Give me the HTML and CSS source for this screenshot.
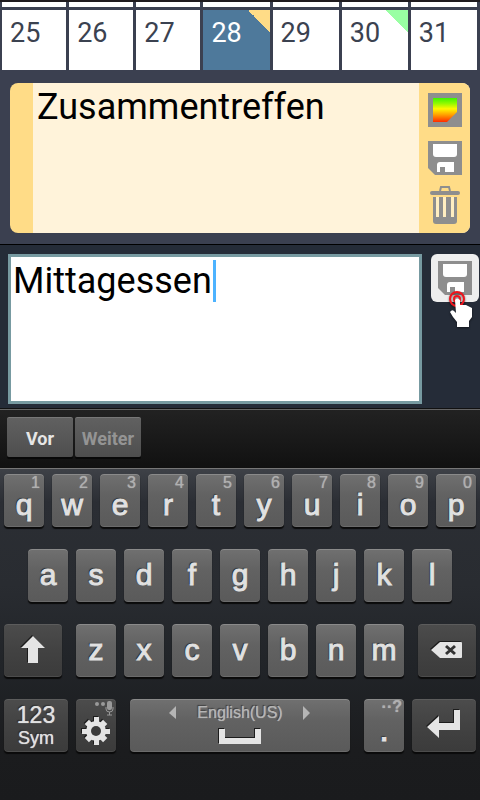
FILE: index.html
```html
<!DOCTYPE html>
<html lang="de">
  <head>
    <meta charset="UTF-8" />
    <meta name="viewport" content="width=device-width, initial-scale=1.0" />
    <title>Kalender</title>
    <link rel="stylesheet" href="styles.css">
  </head>
  <body>
    <!-- Calendar -->
    <section class="calendar">
      <div class="week previous">
        <span></span><span></span><span></span><span></span><span></span><span></span><span></span>
      </div>
      <div class="week">
        <button class="day">25</button>
        <button class="day">26</button>
        <button class="day">27</button>
        <button class="day selected marked-yellow">28</button>
        <button class="day">29</button>
        <button class="day marked-green">30</button>
        <button class="day">31</button>
      </div>
    </section>

    <!-- Saved note -->
    <section class="notes">
      <article class="note">
        <p class="note-text">Zusammentreffen</p>
        <div class="note-actions">
          <button class="icon-button" aria-label="Farbe">
            <svg width="34" height="34" viewBox="0 0 34 34">
              <defs>
                <linearGradient id="rainbow" x1="0" y1="0" x2="0" y2="1">
                  <stop offset="0" stop-color="#3df500" />
                  <stop offset="0.22" stop-color="#8dfa00" />
                  <stop offset="0.45" stop-color="#fff800" />
                  <stop offset="0.7" stop-color="#ffa000" />
                  <stop offset="1" stop-color="#ff2a00" />
                </linearGradient>
              </defs>
              <rect width="34" height="34" fill="#8e8e8e" />
              <path d="M5 5H29V19L19 29H5Z" fill="url(#rainbow)" />
            </svg>
          </button>
          <button class="icon-button" aria-label="Speichern">
            <svg width="34" height="34" viewBox="0 0 34 34">
              <path d="M0 0H34V34H7L0 27Z" fill="#8e8e8e" />
              <path d="M5 3H29V13Q29 16 26 16H8Q5 16 5 13Z" fill="#fff" />
              <path d="M9 31V24Q9 21 12 21H26V31H17V26H12V31Z" fill="#fff" />
            </svg>
          </button>
          <button class="icon-button" aria-label="Löschen">
            <svg width="34" height="38" viewBox="0 0 34 38">
              <path d="M12 5L13 1H21L22 5" fill="none" stroke="#8e8e8e" stroke-width="2" />
              <rect x="2" y="5" width="30" height="4" rx="2" fill="#8e8e8e" />
              <path d="M5 11H29V35Q29 38 26 38H8Q5 38 5 35Z" fill="#8e8e8e" />
              <path d="M8 11H11V31H8ZM15 11H18V31H15ZM23 11H26V31H23Z" fill="#ffeec1" />
            </svg>
          </button>
        </div>
      </article>
    </section>

    <!-- New note -->
    <section class="editor">
      <div class="field">
        <textarea class="field-input" aria-label="Neue Notiz" spellcheck="false">Mittagessen</textarea>
        <span class="caret"></span>
      </div>
      <button class="save-button" aria-label="Notiz speichern">
        <svg width="34" height="34" viewBox="0 0 34 34">
          <path d="M0 0H34V34H7L0 27Z" fill="#8e8e8e" />
          <path d="M5 3H29V13Q29 16 26 16H8Q5 16 5 13Z" fill="#fff" />
          <path d="M9 31V24Q9 21 12 21H26V31H17V26H12V31Z" fill="#fff" />
        </svg>
        <svg class="pointer" width="28" height="42" viewBox="0 0 28 42">
          <circle cx="9" cy="9" r="7" fill="none" stroke="#f0141c" stroke-width="2" />
          <circle cx="9" cy="9" r="3" fill="none" stroke="#f0141c" stroke-width="2" />
          <path d="M7 10Q9 7 12 10V15L18 15L24 18V27L21 31V37H9V32L5 27L2 22Q4 19 6 21L8 23Z" fill="#fff" />
        </svg>
      </button>
    </section>

    <!-- Suggestion bar -->
    <nav class="toolbar">
      <button class="tool">Vor</button>
      <button class="tool" disabled>Weiter</button>
    </nav>

    <!-- Keyboard -->
    <section class="keyboard">
      <div class="row numbered">
        <button class="key"><small>1</small>q</button>
        <button class="key"><small>2</small>w</button>
        <button class="key"><small>3</small>e</button>
        <button class="key"><small>4</small>r</button>
        <button class="key"><small>5</small>t</button>
        <button class="key"><small>6</small>y</button>
        <button class="key"><small>7</small>u</button>
        <button class="key"><small>8</small>i</button>
        <button class="key"><small>9</small>o</button>
        <button class="key"><small>0</small>p</button>
      </div>
      <div class="row indented">
        <button class="key">a</button>
        <button class="key">s</button>
        <button class="key">d</button>
        <button class="key">f</button>
        <button class="key">g</button>
        <button class="key">h</button>
        <button class="key">j</button>
        <button class="key">k</button>
        <button class="key">l</button>
      </div>
      <div class="row">
        <button class="key dark shift" aria-label="Shift">
          <svg width="26" height="28" viewBox="0 0 26 28">
            <path d="M13 0L25 12H18V27H8V12H1Z" />
          </svg>
        </button>
        <button class="key">z</button>
        <button class="key">x</button>
        <button class="key">c</button>
        <button class="key">v</button>
        <button class="key">b</button>
        <button class="key">n</button>
        <button class="key">m</button>
        <button class="key dark backspace" aria-label="Backspace">
          <svg width="32" height="18" viewBox="0 0 32 18">
            <path d="M0 9L9 1H30Q31 1 31 2V16Q31 17 30 17H9Z" />
            <path class="cross" d="M15 5L24 13M24 5L15 13" />
          </svg>
        </button>
      </div>
      <div class="row">
        <button class="key dark symbols"><span>123</span><span class="sym">Sym</span></button>
        <button class="key dark settings" aria-label="Settings">
          <svg class="hint" width="20" height="15" viewBox="0 0 20 15">
            <circle cx="3" cy="3" r="2" />
            <circle cx="9" cy="3" r="2" />
            <rect x="13" y="0" width="5" height="9" rx="2" />
            <path class="stand" d="M12 6V8Q12 11 15.500 11T19 8V6M15.500 11V14M13 14H18" />
          </svg>
          <svg width="28" height="28" viewBox="-14 -14 28 28">
            <rect x="-2" y="-14" width="5" height="28" />
            <rect x="-14" y="-2" width="28" height="5" />
            <rect x="-3" y="-13" width="6" height="26" transform="rotate(45)" />
            <rect x="-3" y="-13" width="6" height="26" transform="rotate(-45)" />
            <circle r="10" />
            <circle class="hole" r="5" />
          </svg>
        </button>
        <button class="key space">
          <span class="language">
            <svg width="8" height="14" viewBox="0 0 8 14"><path d="M0 7L7 0V13Z" /></svg>
            English(US)
            <svg width="8" height="14" viewBox="0 0 8 14"><path d="M0 0L7 7L0 14Z" /></svg>
          </span>
          <svg width="44" height="16" viewBox="0 0 44 16">
            <path d="M1 0H7V9H37V0H43V15H1Z" />
          </svg>
        </button>
        <button class="key period"><small>··?</small>.</button>
        <button class="key dark enter" aria-label="Enter">
          <svg width="34" height="32" viewBox="0 0 34 32">
            <path d="M0 18L12 7V14H27V1H33V21H12V29Z" />
          </svg>
        </button>
      </div>
    </section>
  </body>
</html>
```
FILE: styles.css
```css
* {
  box-sizing: border-box;
}

body {
  margin: 0;
  min-height: 100vh;
  display: flex;
  flex-direction: column;
  background-color: #3b4050;
  font-family: Roboto, sans-serif;
}

button {
  margin: 0;
  padding: 0;
  border: none;
  font-family: inherit;
  cursor: pointer;
}

svg {
  display: block;
}

/* Calendar */
.calendar {
  border-top: 2px solid #1f1b1e;
}

.week {
  display: grid;
  grid-template-columns: repeat(3, 64fr) repeat(4, 66fr);
  gap: 3px;
  padding: 0 3px 0 2px;
}

.previous {
  height: 5px;
  margin-bottom: 3px;
}

.previous span {
  background-color: #fff;
}

.day {
  height: 60px;
  padding: 7px 8px;
  display: flex;
  background-color: #fff;
  color: #3b4250;
  font-size: 27px;
  line-height: 32px;
}

.selected {
  background-color: #4e799b;
  color: #fff;
}

.marked-yellow {
  background-image: linear-gradient(45deg, transparent 50%, #ffdc87 50%);
  background-repeat: no-repeat;
  background-position: top right;
  background-size: 22px 22px;
}

.marked-green {
  background-image: linear-gradient(45deg, transparent 50%, #99ffa3 50%);
  background-repeat: no-repeat;
  background-position: top right;
  background-size: 22px 22px;
}

/* Notes */
.notes {
  padding: 13px 10px 11px;
}

.note {
  min-height: 150px;
  display: flex;
  border-left: 23px solid #ffdc87;
  border-radius: 8px;
  background-color: #fff3da;
  overflow: hidden;
}

.note-text {
  flex: 1;
  margin: 0;
  padding: 3px 4px;
  font-size: 36px;
  line-height: 42px;
}

.note-actions {
  width: 51px;
  padding-top: 10px;
  display: flex;
  flex-direction: column;
  align-items: center;
  gap: 14px;
  background-color: #ffdc87;
}

.icon-button {
  background: none;
}

.icon-button:last-child {
  margin-top: -3px;
}

/* Editor */
.editor {
  display: flex;
  align-items: flex-start;
  gap: 9px;
  padding: 9px 1px 4px 8px;
  border-top: 1px solid #000;
  background-color: #252c38;
}

.field {
  position: relative;
  flex: 1;
  min-width: 0;
  display: flex;
}

.field-input {
  flex: 1;
  min-width: 0;
  height: 150px;
  padding: 3px 2px;
  border: 3px solid #779aa1;
  border-radius: 0;
  outline: none;
  resize: none;
  background-color: #fff;
  color: #000;
  font-family: inherit;
  font-size: 36px;
  line-height: 42px;
}

.caret {
  position: absolute;
  top: 6px;
  left: 205px;
  width: 3px;
  height: 42px;
  background-color: #4db3ff;
}

.save-button {
  position: relative;
  flex: none;
  width: 48px;
  height: 48px;
  display: grid;
  place-items: center;
  border-radius: 6px;
  background-color: #eee;
}

.pointer {
  position: absolute;
  top: 36px;
  left: 17px;
  filter: drop-shadow(0 1px 1px #0008);
}

/* Toolbar */
.toolbar {
  display: flex;
  gap: 2px;
  height: 60px;
  padding: 7px;
  border-top: 1px solid #111;
  box-shadow: inset 0 1px #656565;
  background-image: linear-gradient(#222, #111);
}

.tool {
  width: 66px;
  height: 40px;
  margin-top: 1px;
  padding-top: 3px;
  border-radius: 2px;
  background-image: linear-gradient(#616161, #4e4e4e);
  box-shadow: inset 0 1px #777, 0 2px #080808;
  color: #e6e6e6;
  font-size: 18px;
  font-weight: bold;
}

.tool:disabled {
  color: #949494;
}

/* Keyboard */
.keyboard {
  flex: 1;
  display: flex;
  flex-direction: column;
  gap: 22px;
  padding: 5px 4px;
  border-top: 1px solid #777;
  background-image: linear-gradient(#3e4147, #2b2e34 10%, #292c31 35%, #212428 60%, #1b1c1e 85%, #1a1b1d);
  font-family: "Liberation Sans", Arial, sans-serif;
}

.row {
  display: flex;
  gap: 8px;
}

.indented {
  padding: 0 24px;
}

.key {
  position: relative;
  flex: 40 1 0;
  min-width: 0;
  height: 53px;
  padding-bottom: 2px;
  display: flex;
  flex-direction: column;
  align-items: center;
  justify-content: center;
  border-radius: 4px;
  background-image: linear-gradient(#707070, #626262 40%, #5a5a5a);
  box-shadow: inset 0 1px #8a8a8a, inset 0 -1px #6b6b6b, 0 2px 1px #0a0a0a;
  color: #e1e1e1;
  font-size: 30px;
  line-height: 34px;
  -webkit-text-stroke: 1px #e1e1e1;
  text-shadow: -1px -1px 1px #222;
}

.numbered .key {
  padding-top: 10px;
}

.key small {
  position: absolute;
  top: 0;
  right: 4px;
  color: #b0b0b0;
  font-size: 16px;
  line-height: 18px;
  -webkit-text-stroke: 0;
  text-shadow: 0 0 1px #b0b0b0;
}

.key svg {
  fill: #e4e4e4;
  filter: drop-shadow(-1px -1px 0 #1c1c1c);
}

.dark {
  background-image: linear-gradient(#4c4c4c, #424242 50%, #3b3b3b);
  box-shadow: inset 0 1px #5c5c5c, inset 0 -1px #4c4c4c, 0 2px 1px #0a0a0a;
}

.shift,
.backspace {
  flex-grow: 58;
}

.shift {
  margin-right: 6px;
}

.backspace {
  margin-left: 6px;
}

.key .cross {
  fill: none;
  stroke: #333;
  stroke-width: 3;
}

.symbols,
.enter {
  flex-grow: 64;
}

.symbols {
  font-size: 23px;
  line-height: 26px;
  -webkit-text-stroke: 0;
  text-shadow: 0 0 1px #e1e1e1, -1px -1px 1px #222;
}

.sym {
  font-size: 18px;
  line-height: 20px;
}

.settings {
  padding-top: 12px;
}

.key .hint {
  position: absolute;
  top: 2px;
  right: 2px;
  fill: #999;
  filter: none;
}

.stand {
  fill: none;
  stroke: #999;
}

.key .hole {
  fill: #3a3a3a;
}

.space {
  flex-grow: 220;
  margin: 0 6px;
  padding-bottom: 4px;
}

.language {
  display: flex;
  align-items: center;
  gap: 20px;
  margin-bottom: 6px;
  color: #b5b5b5;
  font-size: 16px;
  line-height: 20px;
  -webkit-text-stroke: 0;
  text-shadow: 0 0 1px #b5b5b5, -1px -1px 1px #333;
}

.key .language svg {
  fill: #b5b5b5;
  filter: none;
}

.period {
  padding-top: 16px;
  font-size: 24px;
  font-weight: bold;
  line-height: 28px;
}

.period small {
  right: 2px;
  line-height: 16px;
}
```
